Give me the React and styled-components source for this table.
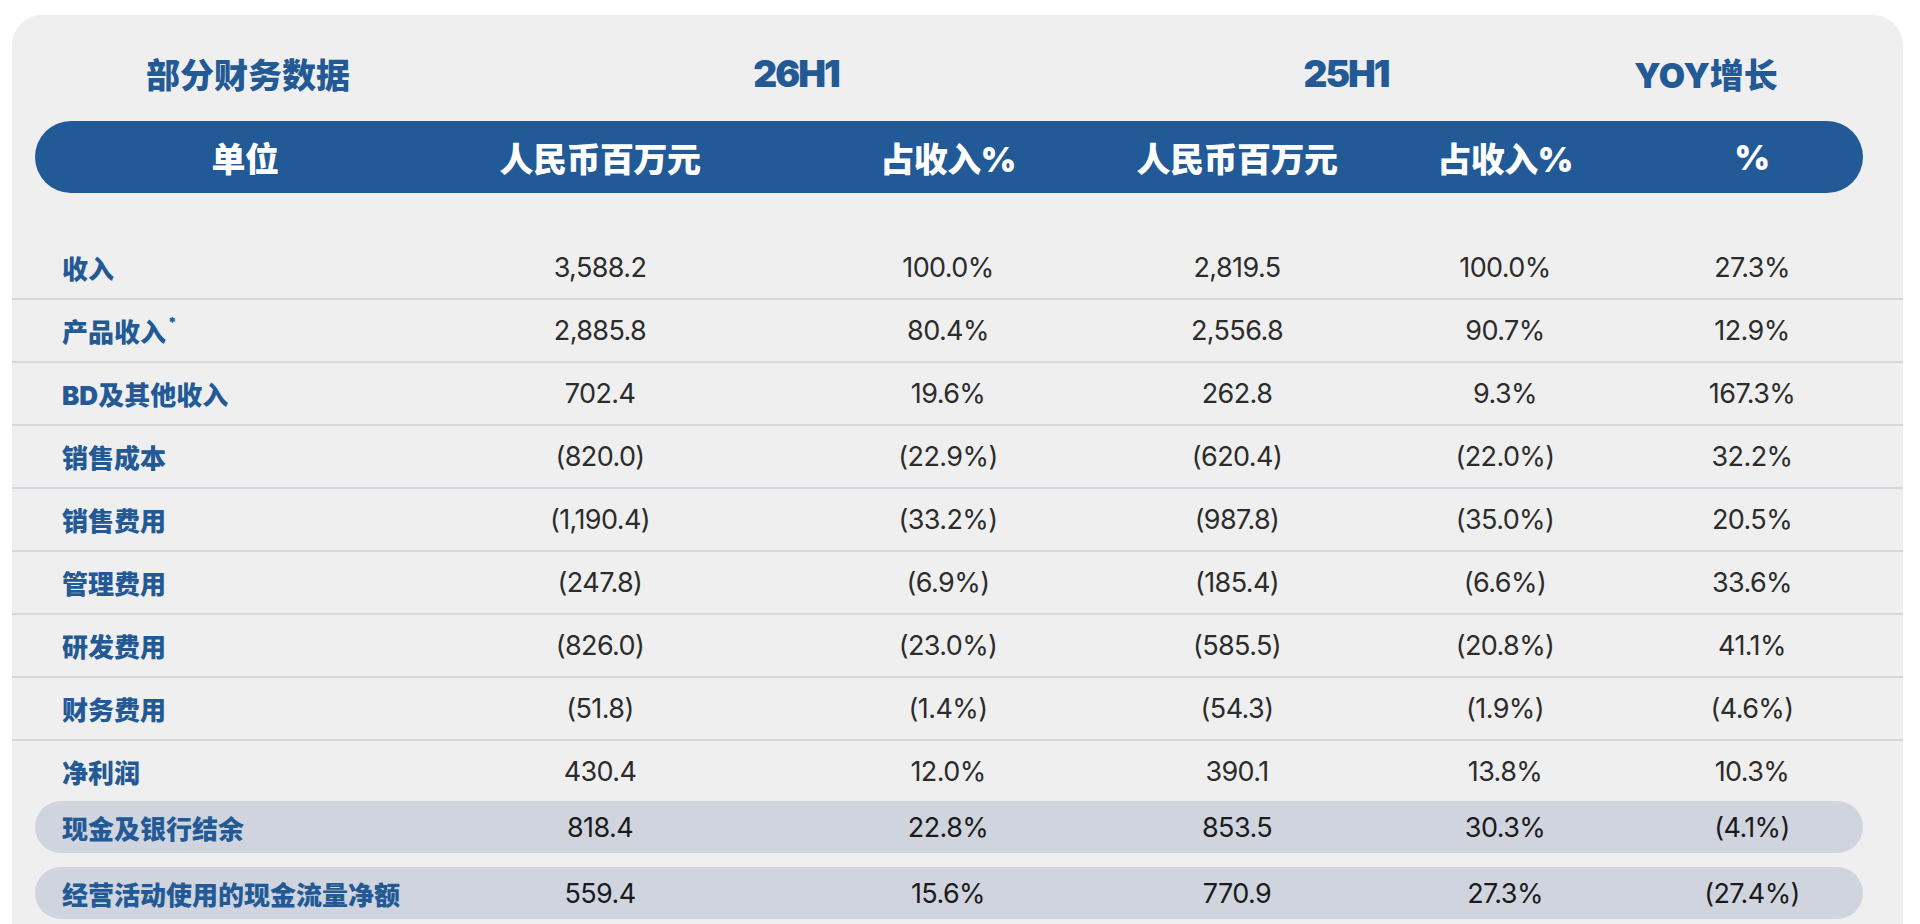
import styled, { createGlobalStyle, css } from "styled-components";

const GlobalStyle = createGlobalStyle`
  html, body {
    margin: 0;
    padding: 0;
    background: #ffffff;
  }
  body {
    font-family: "Inter", "Noto Sans CJK SC", sans-serif;
  }
`

const BLUE = "#235a95";

// column centres line up between the header bar and the data rows
const columns = css`
  display: grid;
  grid-template-columns: 420px 290px 406px 172px 364px 130px 1fr;
  align-items: center;
`

const Panel = styled.div`
  margin: 15px 17px 0 12px;
  padding-bottom: 20px;
  background: #efefef;
  border-radius: 30px 30px 0 0;
`

const TitleRow = styled.div`
  display: grid;
  grid-template-columns: 426px 670px 430px 290px;
  align-items: center;
  height: 72px;
  margin: 0 40px 0 23px;
  padding: 22px 0 12px;
`

const Title = styled.div`
  display: flex;
  justify-content: center;
  white-space: nowrap;
  color: ${BLUE};
  font-family: "Inter", "Noto Sans CJK SC", sans-serif;
  font-size: ${p => p.$latin ? "37px" : "34px"};
  font-weight: 900;
  letter-spacing: ${p => p.$latin ? "-2px" : "0"};
`

const HeaderBar = styled.div`
  ${columns}
  height: 72px;
  margin: 0 40px 0 23px;
  border-radius: 36px;
  background: #225a97;
`

const HeadCell = styled.div`
  display: flex;
  justify-content: center;
  white-space: nowrap;
  color: #ffffff;
  font-family: "Inter", "Noto Sans CJK SC", sans-serif;
  font-size: 34px;
  font-weight: 900;
  letter-spacing: -0.5px;
`

const Body = styled.div`
  margin-top: 44px;
`

const DataRow = styled.div`
  ${columns}
  box-sizing: border-box;
  height: ${p => p.$plain ? "60px" : "63px"};
  padding: 0 40px 0 23px;
  border-bottom: ${p => p.$plain ? "none" : "2px solid #d5d7de"};
`

const HighlightRow = styled.div`
  ${columns}
  height: 52px;
  margin: 0 40px 14px 23px;
  border-radius: 26px;
  background: #d0d4df;
`

const Label = styled.div`
  padding-left: 27px;
  white-space: nowrap;
  color: ${BLUE};
  font-family: "Inter", "Noto Sans CJK SC", sans-serif;
  font-size: 26px;
  font-weight: 900;

  sup {
    font-size: 14px;
    margin-left: 2px;
    position: relative;
    top: -4px;
  }
`

const Value = styled.div`
  display: flex;
  justify-content: center;
  white-space: nowrap;
  color: ${p => p.$dark ? "#1b1b1b" : "#2c2c2c"};
  font-family: "Inter", sans-serif;
  font-size: 27px;
  font-weight: 400;
  letter-spacing: -0.6px;
`

const rows = [
  { label: "收入", values: ["3,588.2", "100.0%", "2,819.5", "100.0%", "27.3%"] },
  { label: "产品收入", star: true, values: ["2,885.8", "80.4%", "2,556.8", "90.7%", "12.9%"] },
  { label: "BD及其他收入", values: ["702.4", "19.6%", "262.8", "9.3%", "167.3%"] },
  { label: "销售成本", values: ["(820.0)", "(22.9%)", "(620.4)", "(22.0%)", "32.2%"] },
  { label: "销售费用", values: ["(1,190.4)", "(33.2%)", "(987.8)", "(35.0%)", "20.5%"] },
  { label: "管理费用", values: ["(247.8)", "(6.9%)", "(185.4)", "(6.6%)", "33.6%"] },
  { label: "研发费用", values: ["(826.0)", "(23.0%)", "(585.5)", "(20.8%)", "41.1%"] },
  { label: "财务费用", values: ["(51.8)", "(1.4%)", "(54.3)", "(1.9%)", "(4.6%)"] },
  { label: "净利润", plain: true, values: ["430.4", "12.0%", "390.1", "13.8%", "10.3%"] },
]

const highlights = [
  { label: "现金及银行结余", values: ["818.4", "22.8%", "853.5", "30.3%", "(4.1%)"] },
  { label: "经营活动使用的现金流量净额", values: ["559.4", "15.6%", "770.9", "27.3%", "(27.4%)"] },
]

const headers = ["单位", "人民币百万元", "占收入%", "人民币百万元", "占收入%", "%"]

const App = () => {
  return (
    <>
      <GlobalStyle />
      <Panel>
        <TitleRow>
          <Title>部分财务数据</Title>
          <Title $latin>26H1</Title>
          <Title $latin>25H1</Title>
          <Title>YOY增长</Title>
        </TitleRow>
        <HeaderBar>
          {headers.map((h, i) => <HeadCell key={i}>{h}</HeadCell>)}
        </HeaderBar>
        <Body>
          {rows.map(r => (
            <DataRow key={r.label} $plain={r.plain}>
              <Label>{r.label}{r.star && <sup>*</sup>}</Label>
              {r.values.map((v, i) => <Value key={i}>{v}</Value>)}
            </DataRow>
          ))}
          {highlights.map(r => (
            <HighlightRow key={r.label}>
              <Label>{r.label}</Label>
              {r.values.map((v, i) => <Value key={i} $dark>{v}</Value>)}
            </HighlightRow>
          ))}
        </Body>
      </Panel>
    </>
  )
}

export default App;
